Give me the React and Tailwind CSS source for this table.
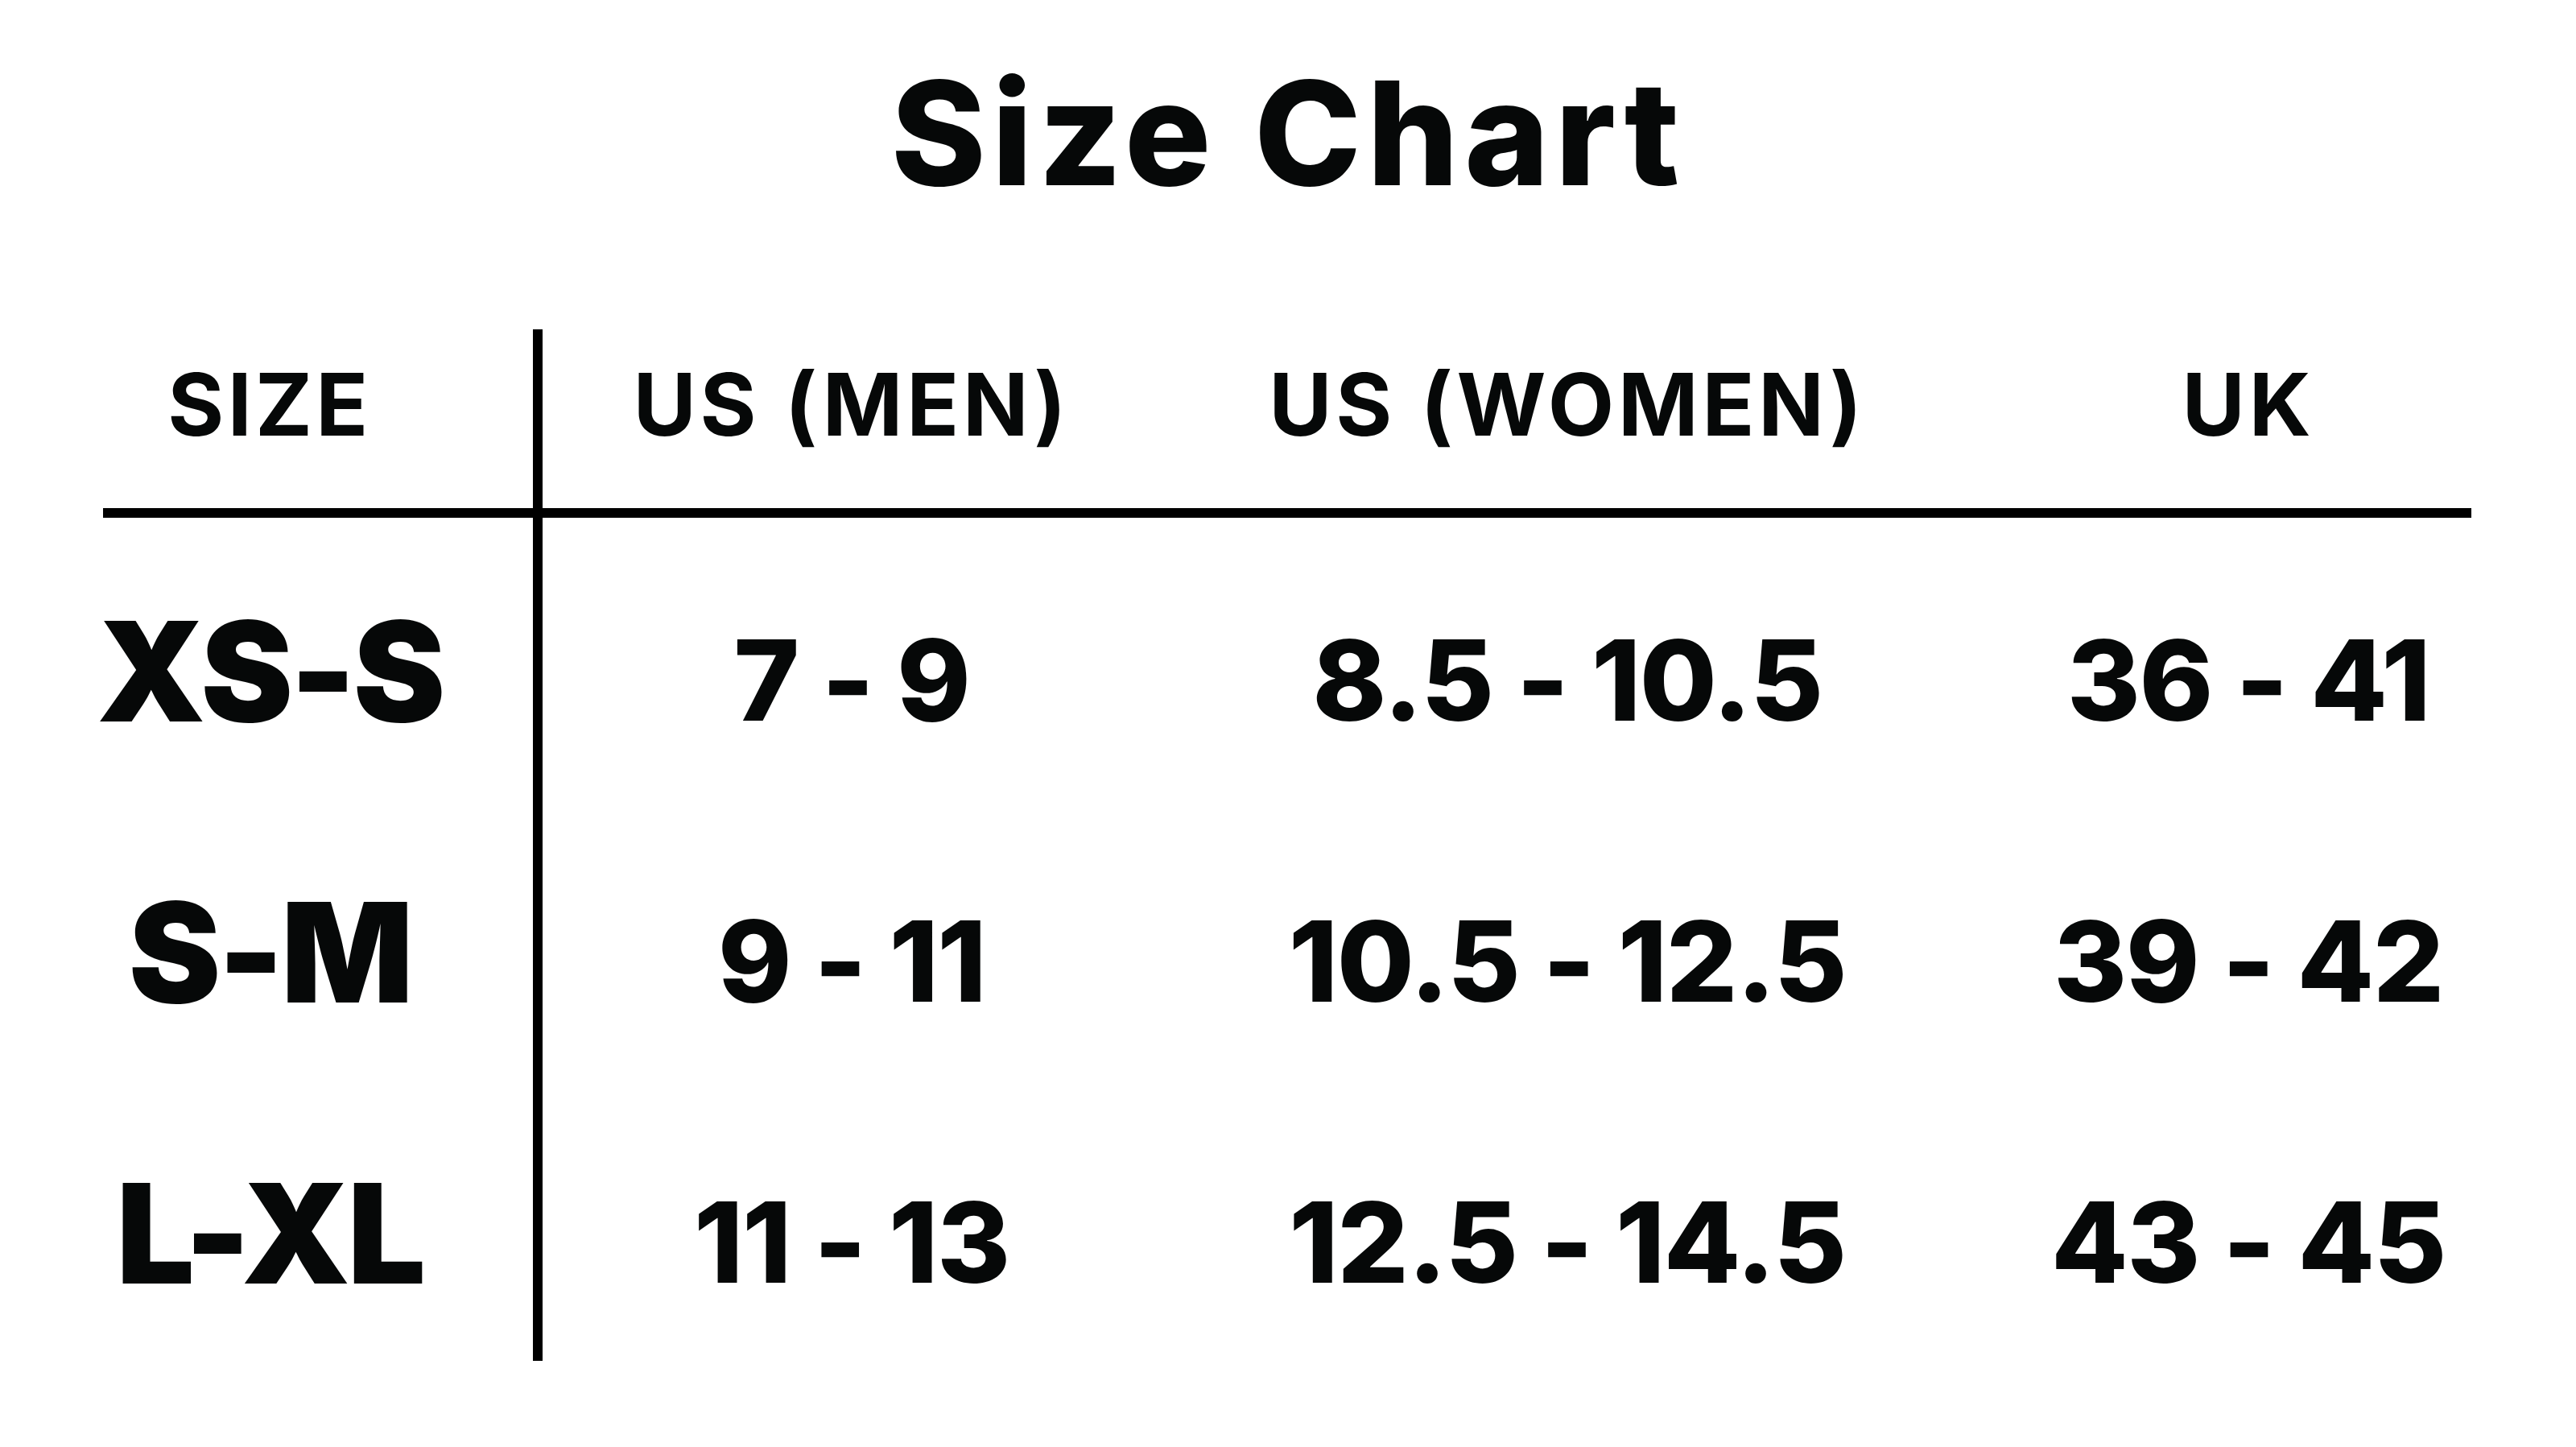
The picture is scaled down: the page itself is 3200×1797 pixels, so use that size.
import React from "react";

const rows = [
  { size: "XS-S", men: "7 - 9", women: "8.5 - 10.5", uk: "36 - 41" },
  { size: "S-M", men: "9 - 11", women: "10.5 - 12.5", uk: "39 - 42" },
  { size: "L-XL", men: "11 - 13", women: "12.5 - 14.5", uk: "43 - 45" },
];

export default function App() {
  return (
    <div className="min-h-screen w-[3200px] bg-white text-[#060808] font-['Inter',sans-serif]">
      {/* Title */}
      <h1 className="pt-[76px] text-center text-[179px] font-extrabold leading-none tracking-[0.04em]">
        Size Chart
      </h1>

      {/* Table */}
      <div className="mt-[154px] ml-[128px] flex w-[2942px]">
        {/* Size column */}
        <div className="flex w-[534px] shrink-0 flex-col">
          <div className="h-[234px] border-b-[12px] border-black">
            <div className="flex w-[414px] justify-center whitespace-nowrap pt-[40px] text-[107px] font-bold leading-none tracking-[0.04em]">
              SIZE
            </div>
          </div>
          {rows.map((r) => (
            <div key={r.size} className="h-[349px]">
              <div className="flex w-[414px] justify-center whitespace-nowrap pt-[104px] text-[172px] font-black leading-none tracking-[-0.02em]">
                {r.size}
              </div>
            </div>
          ))}
        </div>

        {/* Measurement columns */}
        <div className="w-[2408px] min-w-0 shrink-0 border-l-[12px] border-black">
          <div className="flex h-[234px] whitespace-nowrap border-b-[12px] border-black pt-[40px] text-[107px] font-bold leading-none tracking-[0.045em]">
            <div className="w-[768px] shrink-0 text-center">US (MEN)</div>
            <div className="w-[1010px] shrink-0 text-center">US (WOMEN)</div>
            <div className="w-[682px] shrink-0 text-center">UK</div>
          </div>
          {rows.map((r) => (
            <div
              key={r.size}
              className="flex h-[349px] whitespace-nowrap pt-[132px] text-[139px] font-extrabold leading-none tracking-[-0.01em]"
            >
              <div className="w-[768px] shrink-0 text-center">{r.men}</div>
              <div className="w-[1010px] shrink-0 text-center">{r.women}</div>
              <div className="w-[682px] shrink-0 text-center">{r.uk}</div>
            </div>
          ))}
        </div>
      </div>
    </div>
  );
}
